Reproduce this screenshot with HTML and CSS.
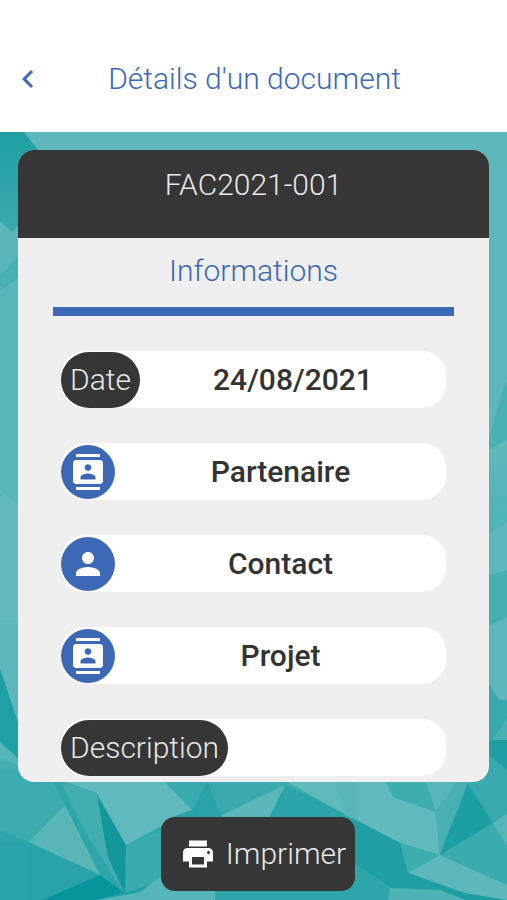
FILE: index.html
```html
<!DOCTYPE html>
<html lang="fr">
<head>
<meta charset="utf-8">
<meta name="viewport" content="width=device-width, initial-scale=1">
<title>Détails d'un document</title>
<link rel="stylesheet" href="styles.css">
</head>
<body>
<header class="topbar">
  <button class="back" type="button" aria-label="Retour">
    <svg class="icon" viewBox="0 0 24 24" aria-hidden="true"><path d="M15.41 7.41 14 6l-6 6 6 6 1.41-1.41L10.83 12z"/></svg>
  </button>
  <h1 class="title">Détails d'un document</h1>
</header>

<main class="page">
  <svg class="backdrop" viewBox="0 132 507 768" preserveAspectRatio="none" aria-hidden="true">
    <defs>
      <linearGradient id="corner" x1="0" y1="0" x2="0" y2="1"><stop offset="0" stop-color="#1f9fa3"/><stop offset="1" stop-color="#4bb1b4"/></linearGradient>
      <linearGradient id="side" x1="0" y1="0" x2="0" y2="1"><stop offset="0" stop-color="#61babc"/><stop offset="1" stop-color="#4bb2b5"/></linearGradient>
      <linearGradient id="low" x1="0" y1="0" x2="0" y2="1"><stop offset="0" stop-color="#45afb2"/><stop offset="1" stop-color="#1c9ea2"/></linearGradient>
    </defs>
    <rect x="0" y="132" width="507" height="768" fill="#5eb8bb"/>
    <path fill="url(#corner)" d="M0 132H24L38 150V290H0z"/>
    <path fill="#5ab7b9" d="M0 221 12 232 22 222V255L0 280z"/>
    <path fill="#47b0b2" d="M22 252V275L0 292V276z"/>
    <path fill="#57b6b8" d="M0 291 22 275V510L0 490z"/>
    <path fill="#63babe" d="M0 490 22 510V620H0z"/>
    <path fill="#1fa0a4" d="M0 668 22 735V765L0 742z"/>
    <path fill="#55b5b8" d="M0 742 22 762V770L0 758z"/>
    <path fill="url(#low)" d="M0 758 30 770H507V900H0z"/>
    <path fill="#2aa4a8" d="M0 842H28L43 900H0z"/>
    <path fill="#3dacb0" d="M0 770H60L65 805 28 842 0 830z"/>
    <path fill="#2ea5a9" d="M52 780 97 793 123 892 100 875 65 805z"/>
    <path fill="#42aeb1" d="M60 782 97 793 108 857 123 892 82 826z"/>
    <path fill="#58b6b9" d="M28 842 65 805 100 875z"/>
    <path fill="#29a3a7" d="M28 842 100 875 43 900H26z"/>
    <path fill="#05959a" d="M100 875 123 892 97 900H43z"/>
    <path fill="#60babd" d="M60 780H163L192 810 126 845 97 793z"/>
    <path fill="#119699" d="M97 795 126 846 125 892 108 857z"/>
    <path fill="#3aabaf" d="M126 845 165 828V880L125 893z"/>
    <path fill="#55b5b8" d="M164 874 140 892 97 900H215V885z"/>
    <path fill="#3aabaf" d="M163 780H210L192 810z"/>
    <path fill="#29a3a6" d="M207 780 222 818H170L192 810z"/>
    <path fill="#3aaaae" d="M207 780H286L240 808 222 815z"/>
    <path fill="#5ab7ba" d="M285 785 222 815V822H270z"/>
    <path fill="#2ba4a8" d="M285 785 358 820H268z"/>
    <path fill="#60babd" d="M284 780H385L393 797 436 812 440 855 400 843 355 820z"/>
    <path fill="#58b6b9" d="M335 780H357V820L345 815z"/>
    <path fill="#1f9fa3" d="M352 818 400 843 408 873 390 887 352 865z"/>
    <path fill="#2ea6aa" d="M352 862 390 887 388 900H215V885H352z"/>
    <path fill="#3eadb0" d="M385 780H425L436 812 393 797zM400 843 440 855 408 873z"/>
    <path fill="#57b6b9" d="M425 780H460L436 812z"/>
    <path fill="#48b0b3" d="M458 780H468L440 855 436 812z"/>
    <path fill="#1c9fa2" d="M468 784 493 823 440 855z"/>
    <path fill="#39aaae" d="M468 780H507V813L493 823z"/>
    <path fill="#3aabaf" d="M493 823 507 846V885L440 855z"/>
    <path fill="#58b6b9" d="M507 813V846L493 823z"/>
    <path fill="#5cb8bb" d="M440 855 507 885V900L465 893 408 873z"/>
    <path fill="#1f9fa3" d="M408 873 466 895 450 898 390 887z"/>
    <path fill="#4fb3b6" d="M390 888 440 890 466 900H388z"/>
    <path fill="#48b0b2" d="M505 383H507V440L485 452z"/>
    <path fill="url(#side)" d="M485 452 507 440V522L485 537z"/>
    <path fill="#44aeb1" d="M485 577 507 570V617L485 628z"/>
    <path fill="#38a9ad" d="M485 678 499 700H507V815L485 782z"/>
    <path fill="#4bb1b4" d="M507 718 492 740H507z"/>
    <path fill="#1f9fa3" d="M485 740H507V770L485 752z"/>
  </svg>

  <section class="card">
    <h2 class="card-title">FAC2021-001</h2>
    <div class="card-body">
      <h3 class="section-title">Informations</h3>
      <div class="row"><span class="tag">Date</span><span class="value">24/08/2021</span></div>
      <div class="row">
        <button class="round" type="button" aria-label="Voir le partenaire"><svg class="icon" viewBox="0 0 24 24" aria-hidden="true"><path d="M20 0H4v2h16V0zM4 24h16v-2H4v2zM20 4H4c-1.1 0-2 .9-2 2v12c0 1.1.9 2 2 2h16c1.1 0 2-.9 2-2V6c0-1.1-.9-2-2-2zm-8 2.75c1.24 0 2.25 1.01 2.25 2.25s-1.01 2.25-2.25 2.25S9.75 10.24 9.75 9 10.76 6.75 12 6.75zM17 17H7v-1.5c0-1.67 3.33-2.5 5-2.5s5 .83 5 2.5V17z"/></svg></button>
        <span class="value">Partenaire</span>
      </div>
      <div class="row">
        <button class="round" type="button" aria-label="Voir le contact"><svg class="icon" viewBox="0 0 24 24" aria-hidden="true"><path d="M12 12c2.21 0 4-1.79 4-4s-1.79-4-4-4-4 1.79-4 4 1.79 4 4 4zm0 2c-2.67 0-8 1.34-8 4v2h16v-2c0-2.66-5.33-4-8-4z"/></svg></button>
        <span class="value">Contact</span>
      </div>
      <div class="row">
        <button class="round" type="button" aria-label="Voir le projet"><svg class="icon" viewBox="0 0 24 24" aria-hidden="true"><path d="M20 0H4v2h16V0zM4 24h16v-2H4v2zM20 4H4c-1.1 0-2 .9-2 2v12c0 1.1.9 2 2 2h16c1.1 0 2-.9 2-2V6c0-1.1-.9-2-2-2zm-8 2.75c1.24 0 2.25 1.01 2.25 2.25s-1.01 2.25-2.25 2.25S9.75 10.24 9.75 9 10.76 6.75 12 6.75zM17 17H7v-1.5c0-1.67 3.33-2.5 5-2.5s5 .83 5 2.5V17z"/></svg></button>
        <span class="value">Projet</span>
      </div>
      <div class="row"><span class="tag">Description</span><span class="value"></span></div>
    </div>
  </section>

  <button class="print" type="button">
    <svg class="icon" viewBox="0 0 24 24" aria-hidden="true"><path d="M19 8H5c-1.66 0-3 1.34-3 3v6h4v4h12v-4h4v-6c0-1.66-1.34-3-3-3zm-3 11H8v-5h8v5zm3-7c-.55 0-1-.45-1-1s.45-1 1-1 1 .45 1 1-.45 1-1 1zm-1-9H6v4h12V3z"/></svg>
    <span>Imprimer</span>
  </button>
</main>
</body>
</html>
```
FILE: styles.css
```css
* {
  box-sizing: border-box;
}

body {
  margin: 0;
  min-height: 100vh;
  display: flex;
  flex-direction: column;
  font-family: Roboto, "Liberation Sans", sans-serif;
  font-size: 30px;
  line-height: 36px;
  font-weight: 300;
  color: #333;
  background: #fff;
}

h1, h2, h3 {
  margin: 0;
  font-size: inherit;
  font-weight: inherit;
}

button {
  border: 0;
  padding: 0;
  font: inherit;
  color: inherit;
  cursor: pointer;
}

.icon {
  display: block;
  width: 36px;
  height: 36px;
  fill: currentColor;
}

.topbar {
  display: grid;
  grid-template-columns: 36px 1fr 36px;
  align-items: center;
  padding: 61px 8px 35px 10px;
  color: #3d68b5;
}

.back {
  background: none;
}

.title {
  text-align: center;
}

.page {
  position: relative;
  flex: 1;
  display: flex;
  flex-direction: column;
  align-items: center;
  padding: 18px 18px 9px;
  overflow: hidden;
}

.backdrop {
  position: absolute;
  inset: 0;
  width: 100%;
  height: 100%;
}

.card {
  position: relative;
  width: 100%;
  border-radius: 16px;
  overflow: hidden;
  background: #efefef;
}

.card-title {
  padding: 17px 0 35px;
  text-align: center;
  color: #e8e8e8;
  background: #363636;
}

.card-body {
  display: flex;
  flex-direction: column;
  gap: 35px;
  padding: 15px 43px 6px;
}

.section-title {
  margin: 0 -8px;
  padding-bottom: 18px;
  border-bottom: 9px solid #3d68b5;
  text-align: center;
  color: #3d68b5;
}

.row {
  display: flex;
  align-items: center;
  height: 57px;
  border-radius: 24px;
  background: #fff;
}

.tag {
  padding: 10px 9px;
  border-radius: 28px;
  color: #e8e8e8;
  background: #363636;
}

.round {
  display: grid;
  place-items: center;
  width: 54px;
  height: 54px;
  border-radius: 50%;
  color: #fff;
  background: #3d68b5;
}

.value {
  flex: 1;
  text-align: center;
  font-weight: 500;
}

.print {
  position: relative;
  display: flex;
  align-items: center;
  gap: 10px;
  margin: 35px 0 0 9px;
  padding: 19px 9px 19px 19px;
  border-radius: 14px;
  color: #e8e8e8;
  background: #363636;
}

.print .icon {
  color: #fff;
}
```
